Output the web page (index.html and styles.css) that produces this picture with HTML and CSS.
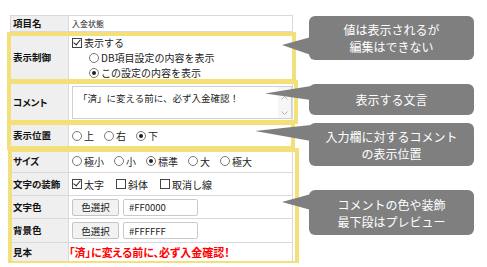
FILE: index.html
```html
<!DOCTYPE html>
<html lang="ja">
<head>
  <meta charset="UTF-8" />
  <title>コメント設定</title>
  <link rel="stylesheet" href="styles.css">
</head>
<body>
  <div class="page">

    <div class="form-area">
      <table class="setting">
        <colgroup><col class="c-label"><col></colgroup>
        <tr class="r-name">
          <th>項目名</th>
          <td class="small">入金状態</td>
        </tr>
        <tr class="r-display">
          <th>表示制御</th>
          <td>
            <div class="opt"><span class="chk on"></span>表示する</div>
            <div class="opt sub"><span class="radio"></span>DB項目設定の内容を表示</div>
            <div class="opt sub"><span class="radio on"></span>この設定の内容を表示</div>
          </td>
        </tr>
        <tr class="r-comment">
          <th>コメント</th>
          <td class="tight">
            <div class="memo">
              <div class="memo-text">「済」に変える前に、必ず入金確認！</div>
              <div class="memo-bar">
                <svg width="7" height="4" viewBox="0 0 7 4"><path d="M0.5 3.5 L3.5 0.5 L6.5 3.5" fill="none" stroke="#b5b5b5" stroke-width="1"/></svg>
                <svg width="7" height="4" viewBox="0 0 7 4"><path d="M0.5 0.5 L3.5 3.5 L6.5 0.5" fill="none" stroke="#b5b5b5" stroke-width="1"/></svg>
              </div>
            </div>
          </td>
        </tr>
        <tr class="r-pos">
          <th>表示位置</th>
          <td>
            <div class="choices">
              <span class="choice"><span class="radio"></span>上</span>
              <span class="choice"><span class="radio"></span>右</span>
              <span class="choice"><span class="radio on"></span>下</span>
            </div>
          </td>
        </tr>
        <tr class="r-size">
          <th>サイズ</th>
          <td>
            <div class="choices">
              <span class="choice"><span class="radio"></span>極小</span>
              <span class="choice"><span class="radio"></span>小</span>
              <span class="choice"><span class="radio on"></span>標準</span>
              <span class="choice"><span class="radio"></span>大</span>
              <span class="choice"><span class="radio"></span>極大</span>
            </div>
          </td>
        </tr>
        <tr class="r-deco">
          <th>文字の装飾</th>
          <td>
            <div class="choices wide">
              <span class="choice"><span class="chk on"></span>太字</span>
              <span class="choice"><span class="chk"></span>斜体</span>
              <span class="choice"><span class="chk"></span>取消し線</span>
            </div>
          </td>
        </tr>
        <tr class="r-color">
          <th>文字色</th>
          <td>
            <div class="picker">
              <button class="pick" type="button">色選択</button>
              <input class="code" type="text" value="#FF0000">
            </div>
          </td>
        </tr>
        <tr class="r-bg">
          <th>背景色</th>
          <td>
            <div class="picker">
              <button class="pick" type="button">色選択</button>
              <input class="code" type="text" value="#FFFFFF">
            </div>
          </td>
        </tr>
        <tr class="r-sample">
          <th>見本</th>
          <td class="preview">「済」に変える前に、必ず入金確認！</td>
        </tr>
      </table>

      <!-- highlight frames drawn over the form -->
      <div class="frame f-display"></div>
      <div class="frame f-comment"></div>
      <div class="frame f-pos"></div>
      <div class="frame f-style"></div>
    </div>

    <div class="notes">
      <div class="note n-display">値は表示されるが<br>編集はできない</div>
      <div class="note n-comment">表示する文言</div>
      <div class="note n-pos">入力欄に対するコメント<br>の表示位置</div>
      <div class="note n-style">コメントの色や装飾<br>最下段はプレビュー</div>
    </div>

  </div>
</body>
</html>
```

FILE: styles.css
```css
body {
  margin: 0;
  background: #fff;
  font-family: "Noto Sans CJK JP", "Noto Sans", sans-serif;
  color: #222;
}

.page {
  display: flex;
  align-items: flex-start;
}

.form-area {
  position: relative;
  width: 283px;
  margin: 15px 0 0 10px;
}

.setting {
  width: 100%;
  border-collapse: collapse;
  table-layout: fixed;
  font-size: 10px;
  line-height: 15px;
}

.c-label {
  width: 58px;
}

.setting th {
  background: #efefef;
  border: 1px solid #d9d9d9;
  padding: 0 0 0 2px;
  text-align: left;
  font-size: 9.5px;
  font-weight: bold;
  color: #111;
  font-feature-settings: "palt";
  white-space: nowrap;
}

.setting td {
  border: 1px solid #d9d9d9;
  padding: 0 0 0 3px;
  vertical-align: middle;
}

.r-name { height: 16px; }
.r-display { height: 52px; }
.r-comment { height: 38px; }
.r-pos { height: 28px; }
.r-size { height: 23px; }
.r-deco { height: 23px; }
.r-color { height: 23px; }
.r-bg { height: 24px; }
.r-sample { height: 20px; }

.small {
  font-size: 8px;
}

.opt {
  display: flex;
  align-items: center;
  height: 15px;
}

.opt.sub {
  padding-left: 17px;
}

.chk {
  position: relative;
  width: 8px;
  height: 8px;
  border: 1px solid #444;
  margin-right: 2px;
  background: #fff;
  flex: none;
}

.chk.on::after {
  content: "";
  position: absolute;
  left: 2px;
  top: -1px;
  width: 3px;
  height: 6px;
  border: solid #222;
  border-width: 0 1.5px 1.5px 0;
  transform: rotate(40deg);
}

.radio {
  display: grid;
  place-items: center;
  width: 8px;
  height: 8px;
  border: 1px solid #777;
  border-radius: 50%;
  margin-right: 2px;
  background: #fff;
  flex: none;
}

.radio.on::after {
  content: "";
  width: 4px;
  height: 4px;
  border-radius: 50%;
  background: #222;
}

.choices {
  display: flex;
  align-items: center;
}

.choice {
  display: flex;
  align-items: center;
  margin-right: 10px;
}

.choices.wide .choice {
  margin-right: 12px;
}

.tight {
  padding: 0 2px 0 1px;
}

.memo {
  display: flex;
  height: 33px;
  border: 1px solid #cfcfcf;
  box-sizing: border-box;
  font-size: 9.5px;
}

.memo-text {
  flex: 1;
  padding: 4px 0 0 5px;
}

.memo-bar {
  display: flex;
  flex-direction: column;
  justify-content: space-between;
  align-items: center;
  width: 13px;
  padding: 9px 0 3px;
  background: #f6f6f6;
}

.picker {
  display: flex;
  align-items: center;
  gap: 4px;
}

.pick {
  width: 47px;
  height: 17px;
  padding: 0;
  border: 1px solid #c4c4c4;
  border-radius: 2px;
  background: #f2f2f2;
  font-family: inherit;
  font-size: 9.5px;
  color: #222;
}

.code {
  width: 75px;
  height: 17px;
  box-sizing: border-box;
  padding: 0 0 0 5px;
  border: 1px solid #cacaca;
  border-radius: 2px;
  font-family: inherit;
  font-size: 9.5px;
  color: #222;
}

.preview {
  color: #ff0000;
  font-weight: bold;
  font-size: 11px;
  font-feature-settings: "palt";
}

.setting td.preview {
  padding-left: 0;
}

/* yellow highlight frames */
.frame {
  position: absolute;
  left: -3px;
  border: 4px solid #f3e07a;
  box-sizing: border-box;
}

.f-display { top: 17px; width: 289px; height: 51px; }
.f-comment { top: 65px; width: 291px; height: 44px; }
.f-pos { top: 106px; width: 288px; height: 29px; }
.f-style { top: 133px; left: -2px; width: 291px; height: 117px; }

/* grey callouts */
.notes {
  display: flex;
  flex-direction: column;
  width: 165px;
  margin: 16px 0 0 16px;
}

.note {
  position: relative;
  display: flex;
  align-items: center;
  justify-content: center;
  background: #7f7f7f;
  color: #fff;
  border-radius: 6px;
  font-size: 12px;
  line-height: 17px;
  text-align: center;
}

.note::before {
  content: "";
  position: absolute;
  background: #7f7f7f;
  clip-path: polygon(100% 0, 0 var(--tip), 100% 100%);
}

.n-display { height: 44px; }
.n-display::before { left: -27px; top: 21px; width: 29px; height: 18px; --tip: 44%; }

.n-comment { height: 31px; margin-top: 24px; }
.n-comment::before { left: -44px; top: 2px; width: 46px; height: 14px; --tip: 54%; }

.n-pos { height: 43px; margin-top: 8px; }
.n-pos::before { left: -54px; top: 2px; width: 56px; height: 16px; --tip: 37%; }

.n-style { height: 45px; margin-top: 24px; }
.n-style::before { left: -27px; top: 4px; width: 29px; height: 16px; --tip: 50%; }
```
